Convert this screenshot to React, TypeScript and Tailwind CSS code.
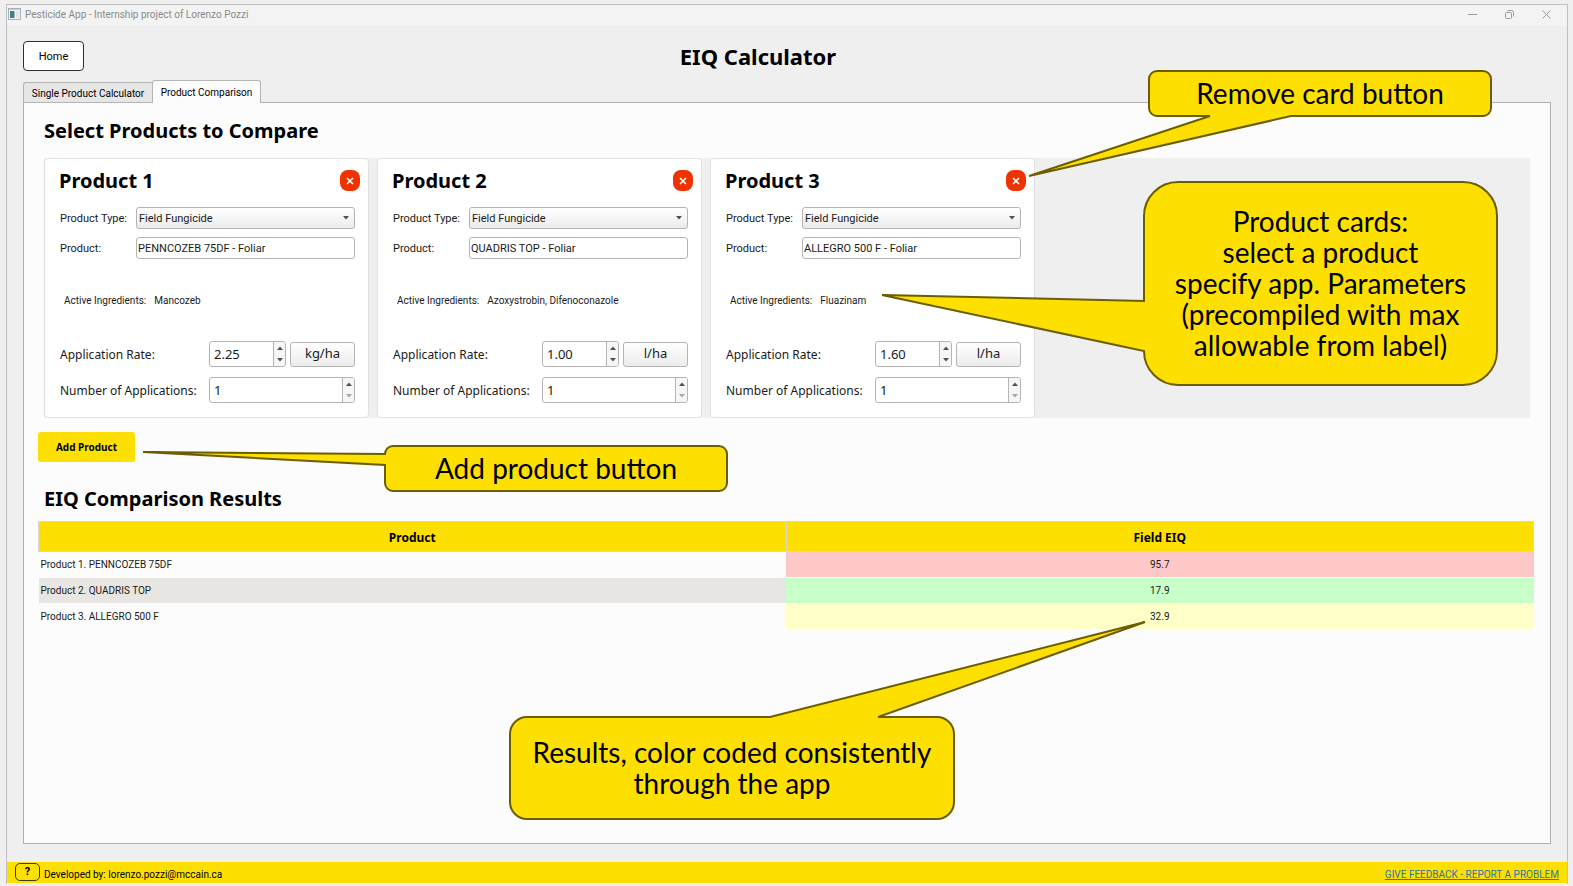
import React from "react";

type Product = {
  id: number;
  name: string;
  ingredients: string;
  rate: string;
  unit: string;
};

const products: Product[] = [
  { id: 1, name: "PENNCOZEB 75DF - Foliar", ingredients: "Mancozeb", rate: "2.25", unit: "kg/ha" },
  { id: 2, name: "QUADRIS TOP - Foliar", ingredients: "Azoxystrobin, Difenoconazole", rate: "1.00", unit: "l/ha" },
  { id: 3, name: "ALLEGRO 500 F - Foliar", ingredients: "Fluazinam", rate: "1.60", unit: "l/ha" },
];

const results = [
  { label: "Product 1. PENNCOZEB 75DF", value: "95.7", row: "bg-[#fcfcfc]", cell: "bg-[#ffc8c8]" },
  { label: "Product 2. QUADRIS TOP", value: "17.9", row: "bg-[#e8e6e2]", cell: "bg-[#c8ffc8]" },
  { label: "Product 3. ALLEGRO 500 F", value: "32.9", row: "bg-[#fcfcfc]", cell: "bg-[#ffffc8]" },
];

function Arrow({ up = false, muted = false }: { up?: boolean; muted?: boolean }) {
  return (
    <svg width="6" height="4" viewBox="0 0 6 4" className={muted ? "fill-[#a8a8a8]" : "fill-[#505050]"}>
      <path d={up ? "M0 4 L3 0.5 L6 4 Z" : "M0 0 L3 3.5 L6 0 Z"} />
    </svg>
  );
}

function SpinBox({ id, value, atMinimum = false, className }: { id: string; value: string; atMinimum?: boolean; className: string }) {
  return (
    <div className={`flex h-[26px] overflow-hidden rounded-[3px] border border-[#b4b4b4] bg-white ${className}`}>
      <input id={id} defaultValue={value} inputMode="decimal" className="w-0 min-w-0 flex-1 pt-0.5 pl-1 text-[13px] text-[#1a1a1a] outline-none" />
      <div className="flex w-3 flex-col border-l border-[#b4b4b4] bg-[#f6f6f6]">
        <button type="button" aria-label="Increase" className="flex flex-1 items-center justify-center">
          <Arrow up />
        </button>
        <button type="button" aria-label="Decrease" className="flex flex-1 items-center justify-center">
          <Arrow muted={atMinimum} />
        </button>
      </div>
    </div>
  );
}

function ProductCard({ product }: { product: Product }) {
  const key = `product-${product.id}`;
  return (
    <section className="w-[325px] shrink-0 rounded-[4px] border border-[#e0e0e8] bg-white pt-[11px]">
      <header className="flex h-[21px] items-center justify-between pr-2 pl-[14px]">
        <h3 className="text-[20px] leading-[21px] font-bold">Product {product.id}</h3>
        <button
          type="button"
          aria-label={`Remove product ${product.id}`}
          className="flex h-[21px] w-5 items-center justify-center rounded-[8px] bg-[#ee3300]"
        >
          <svg width="8" height="8" viewBox="0 0 8 8" className="stroke-white" strokeWidth="1.6">
            <path d="M1 1 L7 7 M7 1 L1 7" />
          </svg>
        </button>
      </header>

      <div className="pr-[13px] pl-[15px] text-[#1a1a1a]">
        <div className="mt-4 flex h-[22px] items-center font-[Roboto,sans-serif] text-[11px]">
          <label htmlFor={`${key}-type`} className="w-[76px] pt-0.5">
            Product Type:
          </label>
          <div className="relative flex-1">
            <select
              id={`${key}-type`}
              className="block h-[22px] w-full appearance-none rounded-[3px] border border-[#b4b4b4] bg-linear-to-b from-white to-[#ececec] pt-0.5 pl-[2px]"
            >
              <option>Field Fungicide</option>
            </select>
            <span className="pointer-events-none absolute top-[9px] right-[6px]">
              <Arrow />
            </span>
          </div>
        </div>

        <div className="mt-2 flex h-[22px] items-center font-[Roboto,sans-serif] text-[11px]">
          <label htmlFor={`${key}-name`} className="w-[76px] pt-0.5">
            Product:
          </label>
          <input
            id={`${key}-name`}
            defaultValue={product.name}
            className="h-[22px] w-0 min-w-0 flex-1 rounded-[3px] border border-[#b4b4b4] bg-white pl-px"
          />
        </div>

        <p className="mt-[33px] flex h-4 items-center gap-2 pl-1 font-[Roboto,sans-serif] text-[10px]">
          <span>Active Ingredients:</span>
          <span>{product.ingredients}</span>
        </p>

        <div className="mt-[33px] flex h-[26px] items-center text-[12px]">
          <label htmlFor={`${key}-rate`} className="w-[149px] pt-0.5">
            Application Rate:
          </label>
          <SpinBox id={`${key}-rate`} value={product.rate} className="w-[77px]" />
          <button
            type="button"
            className="ml-1 h-[25px] flex-1 rounded-[3px] border border-[#b4b4b4] bg-linear-to-b from-white to-[#ececec] text-[13px]"
          >
            {product.unit}
          </button>
        </div>

        <div className="mt-[10px] flex h-[26px] items-center text-[12px]">
          <label htmlFor={`${key}-count`} className="w-[149px] pt-0.5">
            Number of Applications:
          </label>
          <SpinBox id={`${key}-count`} value="1" atMinimum className="flex-1" />
        </div>
      </div>
    </section>
  );
}

function CalloutText({ className, children }: { className: string; children: React.ReactNode }) {
  return (
    <p
      className={`absolute flex items-center justify-center text-center font-['Century_Gothic',Lato,sans-serif] text-[28px] leading-[31px] whitespace-nowrap ${className}`}
    >
      <span>{children}</span>
    </p>
  );
}

/* Speech-bubble notes that float above the window. */
function Callouts() {
  return (
    <aside className="pointer-events-none absolute top-0 left-0">
      <svg width="1573" height="886" viewBox="0 0 1573 886" className="fill-[#fde000] stroke-[#6b5e00]" strokeWidth="2">
        <path d="M1157 71 H1483 A8 8 0 0 1 1491 79 V108 A8 8 0 0 1 1483 116 H1291 L1029 176 L1210 116 H1157 A8 8 0 0 1 1149 108 V79 A8 8 0 0 1 1157 71 Z" />
        <path d="M1178 182 H1463 A34 34 0 0 1 1497 216 V351 A34 34 0 0 1 1463 385 H1178 A34 34 0 0 1 1144 351 L882 295 L1144 301 V216 A34 34 0 0 1 1178 182 Z" />
        <path d="M393 446 H719 A8 8 0 0 1 727 454 V483 A8 8 0 0 1 719 491 H393 A8 8 0 0 1 385 483 V465 L143 452 L385 454 A8 8 0 0 1 393 446 Z" />
        <path d="M527 717 H770 L1145 622 L878 717 H937 A17 17 0 0 1 954 734 V802 A17 17 0 0 1 937 819 H527 A17 17 0 0 1 510 802 V734 A17 17 0 0 1 527 717 Z" />
      </svg>
      <CalloutText className="top-[71px] left-[1149px] h-[45px] w-[342px]">Remove card button</CalloutText>
      <CalloutText className="top-[182px] left-[1144px] h-[203px] w-[353px]">
        Product cards:
        <br />
        select a product
        <br />
        specify app. Parameters
        <br />
        (precompiled with max
        <br />
        allowable from label)
      </CalloutText>
      <CalloutText className="top-[446px] left-[385px] h-[45px] w-[342px]">Add product button</CalloutText>
      <CalloutText className="top-[717px] left-[510px] h-[102px] w-[444px]">
        Results, color coded consistently
        <br />
        through the app
      </CalloutText>
    </aside>
  );
}

export default function App() {
  return (
    <div className="relative flex min-h-screen flex-col overflow-hidden bg-[#efefef] pt-1 pr-[5px] pb-0.5 pl-1.5 font-['Noto_Sans',sans-serif] text-black">
      <div className="flex flex-1 flex-col border-x border-t border-[#c0c0c0]">
        <div className="flex h-5 items-center bg-[#f3f3f3] pb-0.5 pl-px text-[#8a8a8a]">
          <svg width="13" height="12" viewBox="0 0 13 12">
            <rect x="0.5" y="0.5" width="12" height="11" fill="#f4f4f4" stroke="#a9b2b8" />
            <rect x="1" y="1" width="11" height="1" fill="#c5ccd2" />
            <rect x="2" y="3" width="4.5" height="7" fill="#3c7f86" />
            <rect x="8" y="3" width="3" height="7" fill="#dfe5e8" />
          </svg>
          <span className="ml-1 font-[Roboto,sans-serif] text-[10px]">Pesticide App - Internship project of Lorenzo Pozzi</span>
          <div className="ml-auto flex items-center gap-[28px] pr-4 text-[#9a9a9a]">
            <button type="button" aria-label="Minimize">
              <svg width="9" height="9" viewBox="0 0 9 9" fill="none" stroke="currentColor">
                <path d="M0 4.5 H9" />
              </svg>
            </button>
            <button type="button" aria-label="Restore">
              <svg width="9" height="9" viewBox="0 0 9 9" fill="none" stroke="currentColor">
                <rect x="0.5" y="2.5" width="6" height="6" rx="1" />
                <path d="M2.5 0.5 H6.5 A2 2 0 0 1 8.5 2.5 V6.5" />
              </svg>
            </button>
            <button type="button" aria-label="Close">
              <svg width="9" height="9" viewBox="0 0 9 9" fill="none" stroke="currentColor">
                <path d="M0.5 0.5 L8.5 8.5 M8.5 0.5 L0.5 8.5" />
              </svg>
            </button>
          </div>
        </div>

        <main className="flex flex-1 flex-col px-4 pt-4 pb-[18px]">
          <div className="flex items-center">
            <button
              type="button"
              className="h-[30px] w-[61px] rounded-[4px] border border-[#303030] bg-white pt-0.5 font-[Roboto,sans-serif] text-[11px]"
            >
              Home
            </button>
            <h1 className="flex-1 pr-[119px] text-center text-[22px] leading-[30px] font-bold">EIQ Calculator</h1>
          </div>

          <nav role="tablist" className="relative mt-[9px] -mb-px flex items-end font-[Roboto,sans-serif] text-[10px]">
            <button
              type="button"
              role="tab"
              aria-selected="false"
              className="h-[21px] w-[129px] rounded-tl-[3px] border border-r-0 border-[#b4b4b4] bg-[#e6e6e6] pt-0.5"
            >
              Single Product Calculator
            </button>
            <button
              type="button"
              role="tab"
              aria-selected="true"
              className="h-[23px] w-[109px] rounded-t-[3px] border border-b-0 border-[#b4b4b4] bg-[#fcfcfc]"
            >
              Product Comparison
            </button>
          </nav>

          <div className="flex-1 border border-[#b0b0b0] bg-[#fcfcfc] pt-[14px]">
            <h2 className="mx-5 text-[20px] leading-7 font-bold">Select Products to Compare</h2>
            <div className="mx-5 mt-[13px] flex h-[260px] gap-2 bg-[#efefef]">
              {products.map((p) => (
                <ProductCard key={p.id} product={p} />
              ))}
            </div>

            <button type="button" className="mt-[14px] ml-[14px] block h-[30px] w-[97px] rounded-[3px] bg-[#fde000] text-[10px] font-bold">
              Add Product
            </button>

            <h2 className="mx-5 mt-[23px] text-[20px] leading-7 font-bold">EIQ Comparison Results</h2>
            <div className="mr-4 ml-[14px] mt-2">
              <table className="w-full table-fixed border-collapse">
                <thead>
                  <tr className="h-[30px] bg-[#fde000] text-[12px]">
                    <th className="border border-[#d8d8d0] p-0 pt-0.5 font-bold">Product</th>
                    <th className="border border-[#d8d8d0] p-0 pt-0.5 font-bold">Field EIQ</th>
                  </tr>
                </thead>
                <tbody className="font-[Roboto,sans-serif] text-[10px] text-[#1a1a1a]">
                  {results.map((r) => (
                    <tr key={r.label} className="h-[26px] border-b border-[#fcfcfc]">
                      <td className={`p-0 pl-[2px] ${r.row}`}>{r.label}</td>
                      <td className={`p-0 text-center ${r.cell}`}>{r.value}</td>
                    </tr>
                  ))}
                </tbody>
              </table>
            </div>
          </div>
        </main>

        <footer className="flex h-[22px] items-center border-b border-white bg-[#fde000] pr-2 pl-2 font-[Roboto,sans-serif] text-[10px]">
          <button type="button" aria-label="Help" className="mb-0.5 h-[18px] w-[25px] rounded-[5px] border border-[#403800] text-[11px] leading-4 font-bold">
            ?
          </button>
          <span className="ml-1 pt-1">Developed by: lorenzo.pozzi@mccain.ca</span>
          <a href="#feedback" className="ml-auto pt-1 text-[#2e75a0] underline">
            GIVE FEEDBACK - REPORT A PROBLEM
          </a>
        </footer>
      </div>
      <Callouts />
    </div>
  );
}
